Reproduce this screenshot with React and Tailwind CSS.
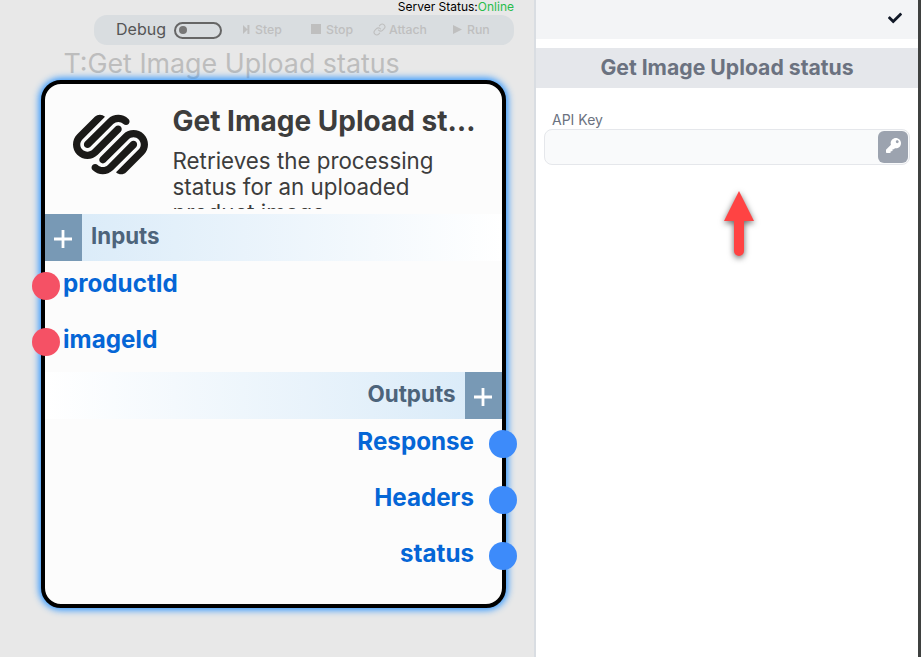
import React from "react";
import { SiSquarespace } from "react-icons/si";
import { FaCheck, FaKey } from "react-icons/fa";
import { FiLink } from "react-icons/fi";

function Action({ icon, label, className }) {
  return (
    <div className={`flex items-center whitespace-nowrap text-[12.3px] font-medium leading-4 text-[#bfbfbf] ${className}`}>
      {icon}
      <span>{label}</span>
    </div>
  );
}

function Plus() {
  return (
    <div className="flex h-full w-[37px] shrink-0 items-center justify-center bg-[#7899b5]">
      <svg className="mr-[1px] mt-[3px] h-[18px] w-[18px]" viewBox="0 0 18 18" fill="none" stroke="white" strokeWidth="2.8">
        <path d="M9 0v18M0 9h18" />
      </svg>
    </div>
  );
}

function InputPort({ name }) {
  return (
    <div className="relative h-14 pl-[18px] text-[24.2px] font-bold leading-[46px] text-[#0566d6]">
      <span className="absolute -left-[13.3px] top-[10.5px] h-7 w-7 rounded-full bg-[#f55165]" />
      {name}
    </div>
  );
}

function OutputPort({ name }) {
  return (
    <div className="relative h-14 pr-7 text-right text-[24.2px] font-bold leading-[46px] text-[#0566d6]">
      <span className="absolute -right-[15.3px] top-[10.7px] h-7 w-7 rounded-full bg-[#3d8bfa]" />
      {name}
    </div>
  );
}

export default function App() {
  return (
    <div className="flex h-[657px] w-[921px] overflow-hidden bg-white font-['Inter',sans-serif]">
      <main className="relative h-full w-[534px] shrink-0 bg-[#e8e8e8]">
        <div className="flex h-[15px] justify-end pr-5 text-[12px] leading-[14px] text-black">
          <span>Server Status:</span>
          <span className="text-[#28bd4b]">Online</span>
        </div>
        <div className="ml-[94px] flex h-[30px] w-[420px] items-center rounded-[13px] bg-[#d9dde0] pl-[22px]">
          <span className="w-[58px] pb-[2px] text-base text-[#555]">Debug</span>
          <span className="flex h-[17px] w-12 items-center rounded-full border-2 border-[#666] pl-[3px]">
            <span className="h-2 w-2 rounded-full bg-[#777]" />
          </span>
          <Action
            className="ml-[21px] w-[68px] gap-[5px]"
            label="Step"
            icon={
              <svg className="mb-[2px] h-[9px] w-[7px]" viewBox="0 0 7 9" fill="currentColor">
                <path d="M0 0l4.6 4.5L0 9zM4.4 0H6.4v9H4.4z" />
              </svg>
            }
          />
          <Action
            className="w-[62px] gap-[5px]"
            label="Stop"
            icon={<span className="mb-[2px] h-[10px] w-[10px] bg-current" />}
          />
          <Action
            className="w-[80px] gap-[3px]"
            label="Attach"
            icon={<FiLink className="mb-[1px] h-[13px] w-[13px]" />}
          />
          <Action
            className="gap-[5px]"
            label="Run"
            icon={
              <svg className="mb-[2px] h-[9px] w-[9px]" viewBox="0 0 9 9" fill="currentColor">
                <path d="M0 0l9 4.5L0 9z" />
              </svg>
            }
          />
        </div>
        <h1 className="ml-[63.5px] whitespace-nowrap text-[26.8px] leading-9 text-[#bdbdbd]">T:Get Image Upload status</h1>

        <section className="absolute left-[41px] top-[80px] h-[528px] w-[465px] rounded-[20px] border-4 border-black bg-[#fcfcfc] shadow-[0_0_7px_2px_#2b94ff]">
          <div className="flex h-[130px]">
            <div className="ml-[28px] mt-[23px] w-[75px] shrink-0">
              <SiSquarespace className="h-[75px] w-[75px] text-[#1b1a18]" />
            </div>
            <div className="ml-[24.5px] mt-[18px] h-[107px] w-[305px] shrink-0 overflow-hidden text-[#3d3d3d]">
              <h2 className="truncate text-[28px] font-bold leading-[39px]">Get Image Upload status</h2>
              <p className="mt-[7px] w-[300px] text-[22.35px] leading-[26px]">Retrieves the processing status for an uploaded product image</p>
            </div>
          </div>
          <div className="flex h-[47px] items-center bg-linear-to-r from-[#d8eaf8] to-white">
            <Plus />
            <span className="mb-[3px] ml-[9px] text-[22.3px] font-bold text-[#4d647b]">Inputs</span>
          </div>
          <div className="h-[111px]">
            <InputPort name="productId" />
            <InputPort name="imageId" />
          </div>
          <div className="flex h-[47px] items-center justify-end bg-linear-to-r from-white to-[#d8eaf8]">
            <span className="mb-[3px] mr-[9.5px] text-[22.4px] font-bold text-[#4d647b]">Outputs</span>
            <Plus />
          </div>
          <OutputPort name="Response" />
          <OutputPort name="Headers" />
          <OutputPort name="status" />
        </section>
      </main>

      <aside className="h-full w-[384px] shrink-0 border-l-2 border-[#d9dde2] bg-white">
        <header className="flex h-[39px] items-center justify-end bg-[#f3f4f6] pr-4">
          <FaCheck className="mb-[3px] h-[14px] w-[14px] text-[#111827]" />
        </header>
        <h2 className="mt-[9px] flex h-10 items-center justify-center bg-[#e5e7eb] pb-[1px] text-[21.2px] font-bold text-[#6b7280]">
          Get Image Upload status
        </h2>
        <div className="px-2 pt-[22px]">
          <label className="block pl-2 text-sm leading-[19px] text-[#6b7280]">API Key</label>
          <div className="flex h-9 w-[366px] items-center justify-end rounded-lg border border-[#e5e7eb] bg-[#f9fafb] pr-[1px]">
            <button className="flex h-8 w-[30px] items-center justify-center rounded-md bg-[#9ca3af]">
              <FaKey className="mb-1 h-[15px] w-[15px] text-white" />
            </button>
          </div>
        </div>
        <svg className="ml-[178px] mt-[20px] h-[88px] w-[50px] overflow-visible drop-shadow-[0_2px_3px_rgba(0,0,0,0.6)]" viewBox="0 0 50 88">
          <path d="M25 6 10 36h10v30a5 5 0 0 0 10 0V36h10Z" fill="#ff4343" />
        </svg>
      </aside>
      <div className="h-full flex-1 bg-[#3f4140]" />
    </div>
  );
}
